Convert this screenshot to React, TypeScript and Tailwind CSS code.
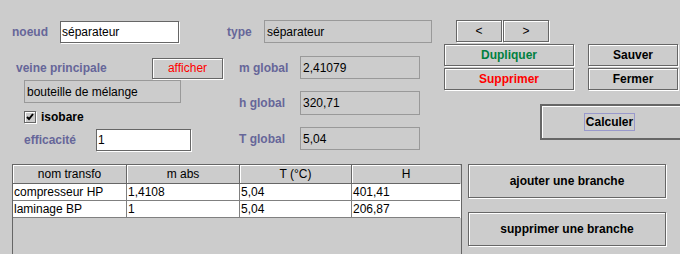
import React from "react"

const etched =
  "border border-[#666666] shadow-[inset_1px_1px_0_#ffffff,1px_1px_0_#ffffff]"

const Label = ({ children, className }: { children: React.ReactNode; className: string }) => (
  <span className={`font-bold text-[#666699] ${className}`}>{children}</span>
)

const Field = ({ value, editable, className }: { value: string; editable?: boolean; className: string }) => (
  <div
    className={
      editable
        ? `flex items-center pl-[1px] bg-white ${etched} ${className}`
        : `flex items-center pl-[2px] bg-[#cccccc] border border-[#999999] ${className}`
    }
  >
    {value}
  </div>
)

const Button = ({ children, className }: { children: React.ReactNode; className: string }) => (
  <div className={`flex items-center justify-center bg-[#cccccc] font-bold ${etched} ${className}`}>
    {children}
  </div>
)

const columns = [
  { title: "nom transfo", cls: "w-[114px] border-r" },
  { title: "m abs", cls: "w-[113px] border-r" },
  { title: "T (°C)", cls: "w-[112px] border-r" },
  { title: "H", cls: "w-[108px]" },
]

const rows = [
  ["compresseur HP", "1,4108", "5,04", "401,41"],
  ["laminage BP", "1", "5,04", "206,87"],
]

export default function App() {
  return (
    <div className="w-[680px] h-[254px] overflow-hidden bg-[#cccccc] text-[12px] leading-none text-black font-['Liberation_Sans',Arial,sans-serif]">
      {/* top form */}
      <div className="flex pt-[20px] h-[164px]">
        {/* left column */}
        <div className="flex flex-col w-[227px]">
          <div className="flex items-center h-[23px]">
            <Label className="pl-[12px] w-[60px]">noeud</Label>
            <Field editable value="séparateur" className="w-[119px] h-[22px]" />
          </div>
          <div className="flex items-center h-[22px] mt-[14px]">
            <Label className="pl-[16px] w-[152px]">veine principale</Label>
            <Button className="w-[71px] h-[21px] font-normal text-[#ff0000]">afficher</Button>
          </div>
          <Field value="bouteille de mélange" className="ml-[24px] mt-[1px] w-[157px] h-[23px]" />
          <div className="flex items-center ml-[24px] mt-[7px] h-[13px]">
            <div className={`w-[12px] h-[12px] bg-[#cccccc] ${etched} flex items-center justify-center`}>
              <svg width="10" height="10" viewBox="0 0 10 10">
                <path d="M2 5 L4 7 L8 2" stroke="#000" strokeWidth="2" fill="none" />
              </svg>
            </div>
            <span className="ml-[5px] font-bold">isobare</span>
          </div>
          <div className="flex items-center h-[23px] mt-[5px]">
            <Label className="pl-[24px] w-[96px]">efficacité</Label>
            <Field editable value="1" className="w-[95px] h-[22px]" />
          </div>
        </div>

        {/* middle column */}
        <div className="flex flex-col w-[213px]">
          <div className="flex items-center h-[23px]">
            <Label className="w-[37px]">type</Label>
            <Field value="séparateur" className="w-[168px] h-[23px]" />
          </div>
          <div className="flex items-center h-[23px] mt-[13px]">
            <Label className="pl-[12px] w-[73px]">m global</Label>
            <Field value="2,41079" className="w-[120px] h-[23px]" />
          </div>
          <div className="flex items-center h-[24px] mt-[12px]">
            <Label className="pl-[12px] w-[73px]">h global</Label>
            <Field value="320,71" className="w-[120px] h-[24px]" />
          </div>
          <div className="flex items-center h-[23px] mt-[12px]">
            <Label className="pl-[12px] w-[73px]">T global</Label>
            <Field value="5,04" className="w-[120px] h-[23px]" />
          </div>
        </div>

        {/* right column */}
        <div className="flex flex-col w-[240px] shrink-0">
          <div className="flex ml-[16px] h-[23px]">
            <Button className="w-[46px] h-[22px] font-normal">&lt;</Button>
            <Button className="ml-[1px] w-[46px] h-[22px] font-normal">&gt;</Button>
          </div>
          <div className="flex ml-[4px] mt-[1px] h-[23px]">
            <Button className="w-[130px] h-[22px] text-[#00803f]">Dupliquer</Button>
            <Button className="ml-[14px] w-[90px] h-[22px]">Sauver</Button>
          </div>
          <div className="flex ml-[4px] mt-[1px] h-[23px]">
            <Button className="w-[130px] h-[22px] text-[#ff0000]">Supprimer</Button>
            <Button className="ml-[14px] w-[90px] h-[22px]">Fermer</Button>
          </div>
          <div className="flex ml-[100px] mt-[13px]">
            <div className="flex items-center justify-center w-[145px] h-[36px] shrink-0 bg-[#cccccc] border-2 border-[#666666] shadow-[inset_1px_1px_0_#ffffff]">
              <span className="font-bold border border-[#9999cc] px-[1px] py-[2px] -ml-[6px]">Calculer</span>
            </div>
          </div>
        </div>
      </div>

      {/* table + branch buttons */}
      <div className="flex">
        <div className="ml-[12px] w-[450px] h-[90px] border-l border-r border-t border-[#666666] flex flex-col">
          <div className="flex h-[19px]">
            {columns.map((c) => (
              <div
                key={c.title}
                className={`${c.cls} flex items-center justify-center border-b border-[#666666] shadow-[inset_1px_1px_0_#ffffff] bg-[#cccccc]`}
              >
                {c.title}
              </div>
            ))}
          </div>
          {rows.map((r, i) => (
            <div key={i} className="flex h-[17px] bg-white">
              {r.map((v, j) => (
                <div
                  key={j}
                  className={`${columns[j].cls} border-b border-[#808080] flex items-center pl-[1px]`}
                >
                  {v}
                </div>
              ))}
            </div>
          ))}
        </div>
        <div className="flex flex-col ml-[6px]">
          <Button className="w-[198px] h-[34px]">ajouter une branche</Button>
          <Button className="mt-[14px] w-[198px] h-[34px]">supprimer une branche</Button>
        </div>
      </div>
    </div>
  )
}
